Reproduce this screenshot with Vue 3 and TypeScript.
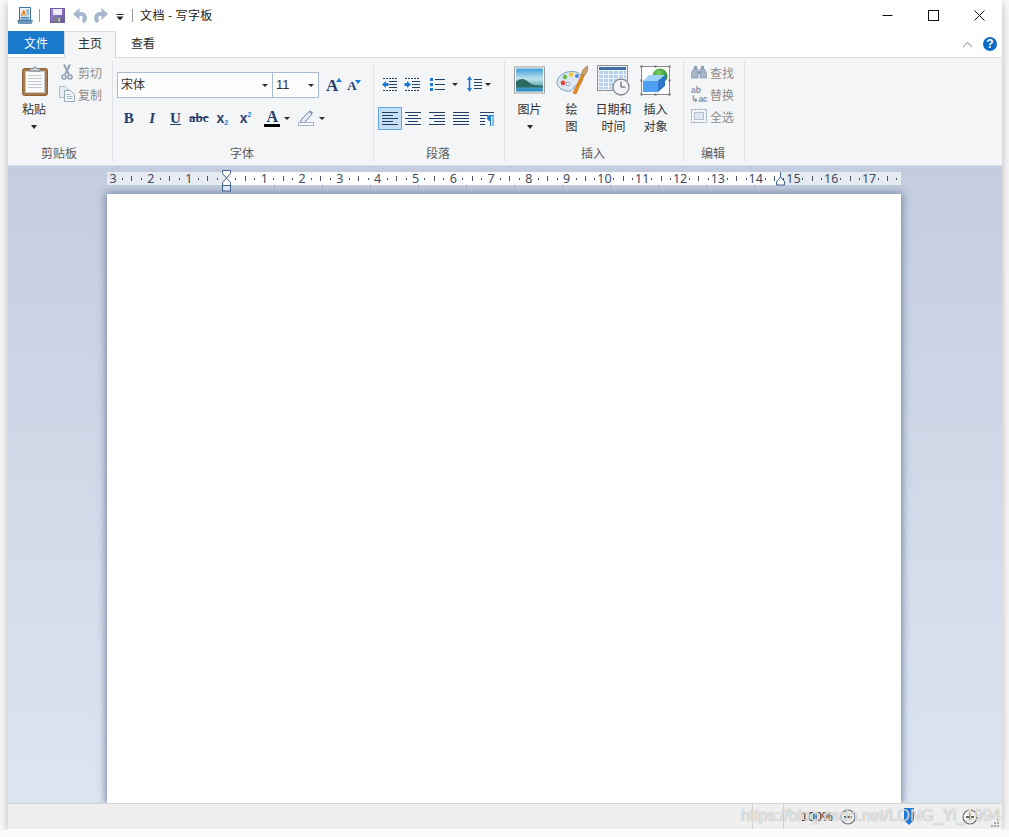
<script setup lang="ts">
import {computed} from 'vue'

// линейка: от -3 до 17 см, ноль закрыт маркером отступа
const rulerCells = computed(() => {
  const cells: {label: string}[] = []
  for (let i = -3; i <= 17; i++) {
    cells.push({label: i === 0 ? '' : String(Math.abs(i))})
  }
  return cells
})

const tabStops = Array.from({length: 11}, (_, i) => i)
</script>

<template>
  <div class="window">
    <!-- заголовок окна -->
    <div class="titlebar">
      <svg class="qa-app" width="16" height="17" viewBox="0 0 16 17">
        <defs>
          <linearGradient id="appPage" x1="0" y1="0" x2="0" y2="1">
            <stop offset="0" stop-color="#f4f8fd"/>
            <stop offset="1" stop-color="#bcd3ea"/>
          </linearGradient>
        </defs>
        <path d="M2.5 .5h11v13h-11z" fill="url(#appPage)" stroke="#3b6f9f"/>
        <path d="M4 9l2.2-6h1.2L9.4 9H8l-.4-1.4H5.8L5.4 9z" fill="#ee8a2c"/>
        <path d="M9 3h3M9.5 5h2.500M10 7h2M4 10.500h8M4 12h8" stroke="#4f86bb"/>
        <path d="M.5 13.500h15l-1 3H1.500z" fill="#6f97bd" stroke="#3b6f9f" stroke-width=".6"/>
      </svg>
      <span class="qa-sep qa-sep-a"></span>
      <svg class="qa-save" width="15" height="15" viewBox="0 0 15 15">
        <defs>
          <linearGradient id="saveBody" x1="0" y1="0" x2="1" y2="1">
            <stop offset="0" stop-color="#a590dc"/>
            <stop offset="1" stop-color="#6a4fa5"/>
          </linearGradient>
        </defs>
        <rect x=".5" y=".5" width="14" height="14" fill="url(#saveBody)" stroke="#6f5ca6"/>
        <rect x="3" y="1" width="9" height="6" fill="#eceaf6"/>
        <rect x="4" y="9" width="7" height="5.500" fill="#7b7d86"/>
        <rect x="8.500" y="10" width="1.500" height="3.500" fill="#c9ccd2"/>
      </svg>
      <svg class="qa-undo" width="14" height="15" viewBox="0 0 14 15">
        <path d="M4 6h4a3.800 3.800 0 0 1 1.500 7.300" fill="none" stroke="#a7b8cc" stroke-width="4"/>
        <path d="M6.500 0v12L0 6z" fill="#a7b8cc"/>
      </svg>
      <svg class="qa-redo" width="14" height="15" viewBox="0 0 14 15">
        <path d="M10 6H6a3.800 3.800 0 0 0-1.500 7.300" fill="none" stroke="#a7b8cc" stroke-width="4"/>
        <path d="M7.500 0v12L14 6z" fill="#a7b8cc"/>
      </svg>
      <svg class="qa-more" width="8" height="8" viewBox="0 0 8 8">
        <path d="M.5 1.500h7" stroke="#222"/>
        <path d="M.5 3.500h7L4 7.500z" fill="#222"/>
      </svg>
      <span class="qa-sep qa-sep-b"></span>
      <span class="title-text">文档 - 写字板</span>
      <div class="win-controls">
        <button class="win-btn">
          <svg width="11" height="11" viewBox="0 0 11 11"><path d="M.500 5.500h10" stroke="#111"/></svg>
        </button>
        <button class="win-btn">
          <svg width="11" height="11" viewBox="0 0 11 11"><rect x=".5" y=".5" width="10" height="10" fill="none" stroke="#111"/></svg>
        </button>
        <button class="win-btn">
          <svg width="11" height="11" viewBox="0 0 11 11"><path d="M.500 .500l10 10M10.500 .500l-10 10" stroke="#111"/></svg>
        </button>
      </div>
    </div>

    <!-- вкладки -->
    <div class="tabs">
      <div class="tab tab-file">文件</div>
      <div class="tab tab-home">主页</div>
      <div class="tab tab-view">查看</div>
      <div class="tabs-right">
        <svg width="11" height="7" viewBox="0 0 11 7"><path d="M1 6l4.500-4.500L10 6" fill="none" stroke="#b4b4b4" stroke-width="1.400"/></svg>
        <span class="help">?</span>
      </div>
    </div>

    <!-- лента -->
    <div class="ribbon">
      <section class="group group-clip">
        <div class="group-body clip-body">
          <div class="big-btn paste-btn">
            <svg class="big-icon" width="28" height="31" viewBox="0 0 28 31">
              <rect x="1.500" y="3.500" width="25" height="27" rx="2" fill="#a97b4b" stroke="#8a6238"/>
              <rect x="4.500" y="6.500" width="19" height="21" fill="#fafafa" stroke="#c9c9c9"/>
              <path d="M7 10.500h14M7 13.500h14M7 16.500h14M7 19.500h14M7 22.500h14" stroke="#c3c8cf"/>
              <path d="M9 6V3.500h3.500a1.500 1.500 0 0 1 3 0H19V6z" fill="#d5d8dc" stroke="#7f8388"/>
            </svg>
            <span class="big-label">粘贴</span>
            <span class="caret"></span>
          </div>
          <div class="small-col">
            <div class="small-row disabled">
              <svg width="16" height="16" viewBox="0 0 16 16">
                <path d="M5 .500l5 10M11 .500l-5 10" stroke="#8fa0b6" stroke-width="1.800"/>
                <circle cx="5" cy="13" r="2" fill="none" stroke="#8fa0b6" stroke-width="1.600"/>
                <circle cx="11" cy="13" r="2" fill="none" stroke="#8fa0b6" stroke-width="1.600"/>
              </svg>
              <span>剪切</span>
            </div>
            <div class="small-row disabled">
              <svg width="16" height="16" viewBox="0 0 16 16">
                <path d="M.5 .500h6l3 3v8h-9z" fill="#e6edf5" stroke="#a9b8c9"/>
                <path d="M5.500 4.500h6l4 4v7h-10z" fill="#f6f8fb" stroke="#98a9bd"/>
                <path d="M7.500 8.500h4M7.500 10.500h6M7.500 12.500h6" stroke="#a9b8c9"/>
              </svg>
              <span>复制</span>
            </div>
          </div>
        </div>
        <div class="group-label">剪贴板</div>
      </section>

      <section class="group group-font">
        <div class="group-body font-body">
          <div class="font-row">
            <div class="combo combo-family"><span>宋体</span><i class="caret"></i></div>
            <div class="combo combo-size"><span>11</span><i class="caret"></i></div>
            <span class="size-btn grow">A<svg width="6" height="4" viewBox="0 0 6 4"><path d="M0 4l3-4 3 4z" fill="#1a7bd6"/></svg></span>
            <span class="size-btn shrink">A<svg width="6" height="4" viewBox="0 0 6 4"><path d="M0 0l3 4 3-4z" fill="#1a7bd6"/></svg></span>
          </div>
          <div class="format-row">
            <span class="fmt fmt-b">B</span>
            <span class="fmt fmt-i">I</span>
            <span class="fmt fmt-u">U</span>
            <span class="fmt fmt-s">abc</span>
            <span class="fmt fmt-x">x<small class="sub">2</small></span>
            <span class="fmt fmt-x">x<small class="sup">2</small></span>
            <span class="fmt-color"><b>A</b><i></i></span>
            <span class="caret color-caret"></span>
            <svg class="pen" width="17" height="16" viewBox="0 0 17 16">
              <path d="M3 10L11 1.500l3 2.500-7.500 8.500L2.500 13.500z" fill="#e9eef5" stroke="#5c7ea8"/>
              <path d="M11 1.500l3 2.500 1-1.500L12.500.5z" fill="#7b9bc4"/>
              <rect x=".5" y="12.500" width="15" height="3" fill="#f4f5f7" stroke="#a9b5c4"/>
            </svg>
            <span class="caret color-caret"></span>
          </div>
        </div>
        <div class="group-label">字体</div>
      </section>

      <section class="group group-para">
        <div class="group-body para-body">
          <div class="para-row para-top">
            <svg class="p-indent" width="16" height="15" viewBox="0 0 16 15">
              <path d="M1 1.500h15M1 13.500h15" stroke="#23406b" stroke-dasharray="2 1"/>
              <path d="M7 4.500h8M7 7.500h8M7 10.500h8" stroke="#23406b"/>
              <path d="M0 7.500l4-3.500v2h2.500v3H4v2z" fill="#1a7bd6"/>
            </svg>
            <svg class="p-indent" width="16" height="15" viewBox="0 0 16 15">
              <path d="M1 1.500h15M1 13.500h15" stroke="#23406b" stroke-dasharray="2 1"/>
              <path d="M8 4.500h8M8 7.500h8M8 10.500h8" stroke="#23406b"/>
              <path d="M7 7.500L3 4v2H.5v3H3v2z" fill="#1a7bd6"/>
            </svg>
            <svg class="p-list" width="15" height="14" viewBox="0 0 15 14">
              <path d="M5 2.500h10M5 7.500h10M5 12.500h10" stroke="#23406b"/>
              <rect x="0" y="1" width="3" height="3" fill="#1a7bd6"/>
              <rect x="0" y="6" width="3" height="3" fill="#1a7bd6"/>
              <rect x="0" y="11" width="3" height="3" fill="#1a7bd6"/>
            </svg>
            <span class="caret p-caret"></span>
            <svg class="p-space" width="15" height="16" viewBox="0 0 15 16">
              <path d="M7 3.500h8M7 6.500h8M7 9.500h8M7 12.500h8" stroke="#23406b"/>
              <path d="M2.500 0l2.500 4H3.300v8H5l-2.500 4L0 12h1.700V4H0z" fill="#1a7bd6"/>
            </svg>
            <span class="caret p-caret-b"></span>
          </div>
          <div class="para-row para-bottom">
            <span class="align-btn active">
              <svg width="16" height="13" viewBox="0 0 16 13"><path d="M0 .500h16M0 3.500h11M0 6.500h16M0 9.500h11M0 12.500h16" stroke="#23406b"/></svg>
            </span>
            <span class="align-btn">
              <svg width="16" height="13" viewBox="0 0 16 13"><path d="M0 .500h16M3 3.500h10M0 6.500h16M3 9.500h10M0 12.500h16" stroke="#23406b"/></svg>
            </span>
            <span class="align-btn">
              <svg width="16" height="13" viewBox="0 0 16 13"><path d="M0 .500h16M5 3.500h11M0 6.500h16M5 9.500h11M0 12.500h16" stroke="#23406b"/></svg>
            </span>
            <span class="align-btn">
              <svg width="16" height="13" viewBox="0 0 16 13"><path d="M0 .500h16M0 3.500h16M0 6.500h16M0 9.500h16M0 12.500h16" stroke="#23406b"/></svg>
            </span>
            <span class="align-btn rtl-btn">
              <svg width="15" height="14" viewBox="0 0 15 14">
                <path d="M1 .500h14M1 3.500h8M1 6.500h5M1 9.500h5M1 12.500h5" stroke="#23406b"/>
                <path d="M11 3.500h4M11 3.500a2.500 2.500 0 0 0 0 5zM11.500 3.500V14M14 3.500V14" fill="#1a7bd6" stroke="#1a7bd6"/>
              </svg>
            </span>
          </div>
        </div>
        <div class="group-label">段落</div>
      </section>

      <section class="group group-insert">
        <div class="group-body insert-body">
          <div class="big-btn">
            <svg class="big-icon" width="31" height="28" viewBox="0 0 31 28">
              <defs>
                <linearGradient id="picSky" x1="0" y1="0" x2="0" y2="1">
                  <stop offset="0" stop-color="#3f9fd9"/>
                  <stop offset=".45" stop-color="#bfe3ee"/>
                  <stop offset=".62" stop-color="#8cc3cc"/>
                  <stop offset="1" stop-color="#1c86bd"/>
                </linearGradient>
              </defs>
              <rect x=".5" y=".5" width="30" height="26" fill="#fff" stroke="#9c9c9c"/>
              <rect x="2" y="2" width="27" height="23" fill="url(#picSky)"/>
              <path d="M2 15c5-4 9-3 13 1 4 3 9 3 14 3v2H2z" fill="#2c6b62"/>
            </svg>
            <span class="big-label">图片</span>
            <span class="caret"></span>
          </div>
          <div class="big-btn">
            <svg class="big-icon" width="32" height="31" viewBox="0 0 32 31">
              <path d="M1 17C2 9 12 5 20 7c6 2 8 7 5 11-2 3-5 1-7 4-1 3-3 5-7 4-6-1-10-4-10-9z" fill="#dbe8f4" stroke="#7c9dbe"/>
              <circle cx="7" cy="18" r="2.400" fill="#e2483f"/>
              <circle cx="9" cy="12" r="2.200" fill="#6bb544"/>
              <circle cx="15" cy="9.500" r="2.200" fill="#f2c531"/>
              <circle cx="12" cy="19" r="1.800" fill="#fff" stroke="#8da7c0"/>
              <circle cx="21" cy="11" r="2" fill="#4d8fd6"/>
              <path d="M17 28L26 9l2.500 1L20 29z" fill="#e98a1f" stroke="#b9690f" stroke-width=".6"/>
              <path d="M25.500 9.500C26 5 28 3 31.500 1c.5 4-.5 7-3 9.500z" fill="#c9a06a" stroke="#8c6b3f" stroke-width=".6"/>
            </svg>
            <span class="big-label">绘<br>图</span>
          </div>
          <div class="big-btn">
            <svg class="big-icon" width="33" height="31" viewBox="0 0 33 31">
              <rect x=".5" y=".5" width="30" height="25" fill="#f0f2f5" stroke="#8f8f8f"/>
              <rect x="2" y="2" width="27" height="3" fill="#3f6fa8"/>
              <rect x="2" y="6" width="27" height="18" fill="#b5d0ee"/>
              <path d="M2 9.500h27M2 13.500h27M2 17.500h27M2 21.500h27M6.500 6v18M11.500 6v18M16.500 6v18M21.500 6v18M26.500 6v18" stroke="#f4f8fc"/>
              <circle cx="24" cy="22" r="8" fill="#f2f3f4" stroke="#85898e" stroke-width="1.300"/>
              <path d="M24 16.500V22h4.500" fill="none" stroke="#4b4f55"/>
            </svg>
            <span class="big-label">日期和<br>时间</span>
          </div>
          <div class="big-btn">
            <svg class="big-icon" width="31" height="31" viewBox="0 0 31 31">
              <defs>
                <radialGradient id="objBall" cx=".4" cy=".3" r=".8">
                  <stop offset="0" stop-color="#79d05f"/>
                  <stop offset="1" stop-color="#137a2a"/>
                </radialGradient>
              </defs>
              <rect x="1.500" y="1.500" width="28" height="28" fill="#fff" stroke="#8a8a8a"/>
              <circle cx="20" cy="11" r="7.500" fill="url(#objBall)"/>
              <path d="M3 16l6-6h16l-7 6z" fill="#9fd0f7"/>
              <path d="M3 16h15v11H3z" fill="#4e9ff0"/>
              <path d="M18 16l7-6v11l-7 6z" fill="#2f78c9"/>
              <path d="M.5 .5h2v2h-2zM14.500 .5h2v2h-2zM28.500 .5h2v2h-2zM.5 14.500h2v2h-2zM28.500 14.500h2v2h-2zM.5 28.500h2v2h-2zM14.500 28.500h2v2h-2zM28.500 28.500h2v2h-2z" fill="#6e6e6e"/>
            </svg>
            <span class="big-label">插入<br>对象</span>
          </div>
        </div>
        <div class="group-label">插入</div>
      </section>

      <section class="group group-edit">
        <div class="group-body edit-body">
          <div class="small-row disabled">
            <svg width="16" height="14" viewBox="0 0 16 14">
              <path d="M3 1h3v3H3zM10 1h3v3h-3z" fill="#8fa0b6"/>
              <path d="M2.500 4h4.500v9H.5V8zM9 4h4.500l2 4v5H9z" fill="#a6b5c8" stroke="#8397ae" stroke-width=".7"/>
              <path d="M7 6h2v3H7z" fill="#8397ae"/>
            </svg>
            <span>查找</span>
          </div>
          <div class="small-row disabled">
            <span class="replace-icon"><b>ab</b><b class="ac">↳ac</b></span>
            <span>替换</span>
          </div>
          <div class="small-row disabled">
            <svg width="16" height="14" viewBox="0 0 16 14">
              <rect x=".5" y=".5" width="15" height="13" fill="none" stroke="#8fa0b6" stroke-dasharray="2 1"/>
              <rect x="3.500" y="3.500" width="9" height="7" fill="#dfe6ee" stroke="#b2bfce"/>
            </svg>
            <span>全选</span>
          </div>
        </div>
        <div class="group-label">编辑</div>
      </section>
    </div>

    <!-- рабочая область -->
    <div class="workspace">
      <div class="ruler-band">
        <div class="ruler">
          <div v-for="(cell, i) in rulerCells" :key="i" class="cm">
            <span class="cm-num">{{ cell.label }}</span>
            <span class="cm-slot"><i class="dot"></i></span>
            <span class="cm-slot"><i class="tick"></i></span>
            <span class="cm-slot"><i class="dot"></i></span>
          </div>
        </div>
        <div class="tabstops">
          <i v-for="n in tabStops" :key="n"></i>
        </div>
        <svg class="marker-left" width="11" height="22" viewBox="0 0 11 22">
          <path d="M1.500 .500h8v3L5.500 8 1.500 3.500z" fill="#fff" stroke="#3f5f8c"/>
          <path d="M5.500 8l4 4.500v3h-8v-3z" fill="#fff" stroke="#3f5f8c"/>
          <rect x="1.500" y="15.500" width="8" height="5.500" fill="#dfe5ee" stroke="#3f5f8c"/>
        </svg>
        <svg class="marker-right" width="11" height="14" viewBox="0 0 11 14">
          <path d="M5.500 0v6" stroke="#3f5f8c"/>
          <path d="M5.500 5l4 4.500v3.500h-8V9.500z" fill="#fff" stroke="#3f5f8c"/>
        </svg>
      </div>
      <div class="page"></div>
    </div>

    <!-- строка состояния -->
    <div class="statusbar">
      <span class="status-sep"></span>
      <span class="status-sep status-sep-zoom"></span>
      <span class="zoom-value">100%</span>
      <svg class="zoom-minus" width="16" height="16" viewBox="0 0 16 16">
        <circle cx="8" cy="8" r="7" fill="#f5f5f5" stroke="#6a6a6a" stroke-width="1.200"/>
        <path d="M4 8h8" stroke="#333" stroke-width="1.500"/>
      </svg>
      <div class="zoom-track">
        <svg width="10" height="17" viewBox="0 0 10 17">
          <path d="M0 0h10v12l-5 5-5-5z" fill="#1a7bd6"/>
        </svg>
      </div>
      <svg class="zoom-plus" width="16" height="16" viewBox="0 0 16 16">
        <circle cx="8" cy="8" r="7" fill="#f5f5f5" stroke="#6a6a6a" stroke-width="1.200"/>
        <path d="M4 8h8M8 4v8" stroke="#333" stroke-width="1.500"/>
      </svg>
      <svg class="grip" width="10" height="10" viewBox="0 0 10 10">
        <path d="M7 1h2v2H7zM4 4h2v2H4zM7 4h2v2H7zM1 7h2v2H1zM4 7h2v2H4zM7 7h2v2H7z" fill="#a9a9a9"/>
      </svg>
      <span class="watermark">https://blog.csdn.net/LONG_Yi_1994</span>
    </div>
  </div>
</template>

<style>
html,
body {
  background: #fbfbfb;
}
</style>

<style scoped>
.window {
  position: relative;
  display: flex;
  flex-direction: column;
  box-sizing: border-box;
  width: 994px;
  height: 830px;
  margin-left: 8px;
  background: #fff;
  box-shadow: 0 2px 10px rgba(0, 0, 0, .28);
  font-family: "Noto Sans CJK SC", "Liberation Sans", sans-serif;
  font-size: 12px;
  color: #3a3a3a;
  overflow: hidden;
}

svg {
  display: block;
  flex: none;
}

.titlebar {
  display: flex;
  align-items: center;
  height: 30px;
  padding-left: 9px;
  flex: none;
}

.qa-sep {
  width: 1px;
  height: 13px;
  background: #9a9a9a;
}

.qa-sep-a {
  margin-left: 6px;
}

.qa-save {
  margin-left: 10px;
}

.qa-undo {
  margin-left: 8px;
}

.qa-redo {
  margin-left: 7px;
}

.qa-more {
  margin-left: 8px;
  margin-top: 3px;
}

.qa-sep-b {
  margin-left: 8px;
}

.title-text {
  margin-left: 7px;
  margin-bottom: 2px;
  letter-spacing: .4px;
  color: #222;
}

.win-controls {
  display: flex;
  margin-left: auto;
  height: 30px;
}

.win-btn {
  display: flex;
  align-items: center;
  justify-content: center;
  width: 46px;
  padding: 0;
  border: 0;
  background: none;
}

.tabs {
  display: flex;
  align-items: flex-start;
  height: 27px;
  flex: none;
  padding-top: 1px;
  box-sizing: border-box;
  position: relative;
  z-index: 1;
}

.tab {
  display: flex;
  align-items: center;
  justify-content: center;
  box-sizing: border-box;
  color: #2c2c2c;
}

.tab-file {
  width: 56px;
  height: 23px;
  background: #1979ca;
  color: #fff;
}

.tab-home {
  width: 52px;
  height: 27px;
  background: #f4f5f7;
  border: 1px solid #dadbdc;
  border-bottom: 0;
  padding-bottom: 5px;
}

.tab-view {
  width: 54px;
  height: 23px;
}

.tabs-right {
  display: flex;
  align-items: center;
  gap: 10px;
  margin-left: auto;
  margin-right: 5px;
  height: 26px;
}

.help {
  display: flex;
  align-items: center;
  justify-content: center;
  width: 14px;
  height: 14px;
  border-radius: 50%;
  background: #0a6cc9;
  color: #fff;
  font: bold 12px "Liberation Sans", sans-serif;
}

.ribbon {
  display: flex;
  box-sizing: border-box;
  height: 108px;
  flex: none;
  padding: 3px 0;
  background: #f4f5f7;
  border-top: 1px solid #dadbdc;
}

.group {
  display: flex;
  flex-direction: column;
  box-sizing: border-box;
  border-right: 1px solid #dfe1e4;
}

.group-clip {
  width: 105px;
}

.group-font {
  width: 261px;
}

.group-para {
  width: 131px;
}

.group-insert {
  width: 179px;
}

.group-edit {
  width: 61px;
}

.group-body {
  flex: 1;
  min-height: 0;
}

.group-label {
  height: 18px;
  line-height: 18px;
  padding-right: 2px;
  text-align: center;
  color: #5c5c5c;
}

.caret {
  display: block;
  width: 0;
  height: 0;
  border-left: 3.500px solid transparent;
  border-right: 3.500px solid transparent;
  border-top: 4px solid #2b2b2b;
}

.clip-body {
  display: flex;
}

.big-btn {
  display: flex;
  flex-direction: column;
  align-items: center;
  width: 42px;
  padding-top: 4px;
  box-sizing: border-box;
}

.big-icon {
  height: 31px;
}

.big-label {
  margin-top: 4px;
  line-height: 17px;
  text-align: center;
  color: #333;
}

.big-btn .caret {
  margin-top: 8px;
}

.paste-btn {
  width: 52px;
}

.paste-btn .big-icon {
  margin-left: 2px;
}

.small-col {
  margin-left: -1px;
}

.small-row {
  display: flex;
  align-items: center;
  gap: 3px;
  height: 22px;
}

.disabled {
  color: #8c8c8c;
}

.font-body {
  padding: 11px 0 0 4px;
}

.font-row {
  display: flex;
  align-items: flex-start;
}

.combo {
  display: flex;
  align-items: center;
  justify-content: space-between;
  box-sizing: border-box;
  height: 26px;
  padding: 0 4px 0 3px;
  background: #fdfdfe;
  border: 1px solid #a9bad3;
  color: #333;
}

.combo-family {
  width: 156px;
}

.combo-family span {
  margin-bottom: 4px;
}

.combo-size {
  width: 47px;
  margin-left: -1px;
  font-family: "Liberation Sans", sans-serif;
  font-size: 13px;
}

.combo-size span {
  margin-bottom: 2px;
}

.combo .caret {
  border-left-width: 3px;
  border-right-width: 3px;
  border-top-width: 3px;
}

.size-btn {
  display: flex;
  align-items: flex-start;
  font-family: "Liberation Serif", serif;
  font-weight: bold;
  color: #24406b;
  line-height: 1;
}

.size-btn svg {
  margin-top: 1px;
  margin-left: -2px;
}

.grow {
  margin: 5px 0 0 7px;
  font-size: 17px;
}

.shrink {
  margin: 7px 0 0 5px;
  font-size: 13px;
}

.format-row {
  display: flex;
  align-items: center;
  height: 24px;
  margin-top: 8px;
  margin-left: -4px;
  padding-left: 4px;
}

.fmt {
  display: flex;
  justify-content: center;
  align-items: baseline;
  width: 23.400px;
  font: bold 15px "Liberation Serif", serif;
  color: #24406b;
}

.fmt-i {
  font-style: italic;
}

.fmt-u {
  text-decoration: underline;
}

.fmt-s {
  text-decoration: line-through;
  font-size: 13px;
}

.fmt-x {
  font-family: "Liberation Sans", sans-serif;
  font-size: 14px;
}

.fmt-x small {
  font-size: 7px;
  color: #1a7bd6;
}

.sub {
  transform: translateY(2px);
}

.sup {
  transform: translateY(-6px);
}

.fmt-color {
  display: flex;
  flex-direction: column;
  align-items: center;
  width: 16px;
  margin-left: 7px;
}

.fmt-color b {
  font: bold 16px/14px "Liberation Serif", serif;
  color: #24406b;
}

.fmt-color i {
  width: 16px;
  height: 3px;
  background: #000;
}

.color-caret {
  margin-left: 4px;
  border-left-width: 3px;
  border-right-width: 3px;
  border-top-width: 3px;
}

.pen {
  margin-left: 8px;
}

.format-row .pen + .color-caret {
  margin-left: 4px;
}

.para-body {
  padding-left: 4px;
}

.para-row {
  display: flex;
  align-items: center;
}

.para-top {
  height: 24px;
  padding-top: 11px;
  margin-bottom: 11px;
}

.p-indent {
  margin-left: 4px;
  margin-right: 2px;
}

.p-list {
  margin-left: 8px;
}

.p-caret {
  margin-left: 7px;
  border-left-width: 3px;
  border-right-width: 3px;
  border-top-width: 3px;
}

.p-space {
  margin-left: 9px;
}

.p-caret-b {
  margin-left: 3px;
  border-left-width: 3px;
  border-right-width: 3px;
  border-top-width: 3px;
}

.align-btn {
  display: flex;
  align-items: center;
  justify-content: center;
  box-sizing: border-box;
  width: 23.600px;
  height: 23px;
}

.align-btn.active {
  background: #c6dff5;
  border: 1px solid #62a3e0;
}

.rtl-btn {
  margin-left: 1px;
  width: 26px;
}

.insert-body {
  display: flex;
  padding-left: 3.500px;
}

.edit-body {
  padding-left: 7px;
}

.edit-body .small-row {
  gap: 3px;
}

.replace-icon {
  display: flex;
  flex-direction: column;
  gap: 1px;
  width: 16px;
  font: bold 8.500px/8px "Liberation Sans", sans-serif;
  color: #7f93ab;
}

.replace-icon b {
  display: block;
  height: 8px;
  overflow: visible;
}

.ac {
  white-space: nowrap;
  letter-spacing: -.5px;
}

.workspace {
  display: flex;
  flex-direction: column;
  flex: 1;
  min-height: 0;
  padding-left: 99px;
  overflow: hidden;
  background: linear-gradient(#c3cddf, #dce6f2);
  border-top: 1px solid #dbe0e8;
}

.ruler-band {
  position: relative;
  flex: none;
  width: 794px;
  height: 28px;
  padding-top: 6px;
  box-sizing: border-box;
}

.ruler {
  display: flex;
  height: 13px;
  padding-left: 1.400px;
  background: linear-gradient(90deg, #e6eaf1 119px, #fff 119px, #fff 673px, #e6eaf1 673px);
}

.cm {
  display: flex;
  flex: none;
  width: 37.800px;
}

.cm-num {
  display: flex;
  justify-content: center;
  width: 9.450px;
  flex: none;
  white-space: nowrap;
  font: 12.500px/13px "Noto Sans", sans-serif;
  color: #3f4b63;
}

.cm-slot {
  display: flex;
  align-items: center;
  justify-content: center;
  width: 9.450px;
  flex: none;
}

.cm:last-child .cm-slot:last-child {
  width: 8px;
}

.dot {
  width: 1px;
  height: 2px;
  background: #46536b;
}

.tick {
  width: 1px;
  height: 5px;
  background: #46536b;
}

.tabstops {
  display: flex;
  gap: 47px;
  padding-left: 167px;
}

.tabstops i {
  width: 1px;
  height: 3px;
  background: #9aa3b2;
}

.marker-left {
  position: absolute;
  left: 114px;
  top: 4px;
}

.marker-right {
  position: absolute;
  left: 668px;
  top: 6px;
}

.page {
  flex: 1;
  width: 794px;
  background: #fff;
  box-shadow: 0 0 8px 1px #6f7f9e;
}

.statusbar {
  position: relative;
  display: flex;
  align-items: center;
  box-sizing: border-box;
  height: 27px;
  flex: none;
  padding-left: 744px;
  background: #efefef;
  border-top: 1px solid #d5d5d5;
  border-bottom: 1px solid #fff;
}

.statusbar > * {
  flex: none;
}

.status-sep {
  align-self: stretch;
  width: 31px;
  box-sizing: border-box;
  border-left: 1px solid #d2d2d2;
}

.status-sep-zoom {
  width: 18px;
}

.zoom-value {
  width: 32px;
  font: 12.500px "Liberation Sans", sans-serif;
  color: #222;
}

.zoom-minus {
  margin-left: 7px;
}

.zoom-track {
  display: flex;
  align-items: center;
  width: 106px;
  padding-left: 48px;
  box-sizing: border-box;
}

.grip {
  margin-left: 12px;
  margin-top: 12px;
}

.watermark {
  position: absolute;
  left: 733px;
  top: 2px;
  font: 16px/20px "Liberation Sans", sans-serif;
  white-space: nowrap;
  color: rgba(255, 255, 255, .75);
  text-shadow: 0 0 1px rgba(110, 110, 110, .8);
}
</style>
